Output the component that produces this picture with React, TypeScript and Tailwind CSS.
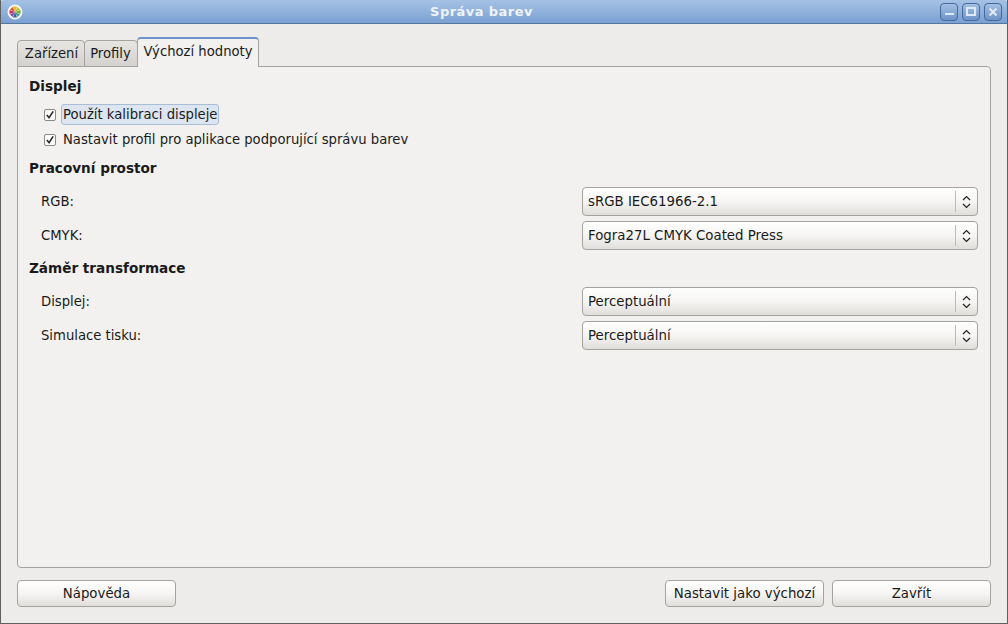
import React from "react";

const font = "font-['DejaVu_Sans',sans-serif]";

const Checkbox: React.FC = () => (
  <span className="w-[12px] h-[12px] border border-[#8a8a88] rounded-[2px] bg-[#fbfbfa] flex items-center justify-center shrink-0">
    <svg width="10" height="10" viewBox="0 0 11 11">
      <path d="M2 5.5 L4.5 8.5 L9 1.5" fill="none" stroke="#2a2a2a" strokeWidth="1.8" />
    </svg>
  </span>
);

const Select: React.FC<{ value: string }> = ({ value }) => (
  <div className="w-[396px] h-[29px] border border-[#a5a39f] rounded-[4px] bg-gradient-to-b from-white via-[#f6f5f3] to-[#dfdedb] flex items-center text-[13.33px] text-[#1a1a1a]">
    <span className="flex-1 pl-[5px]">{value}</span>
    <span className="w-px h-[21px] bg-[#bdbbb7]" />
    <span className="w-[21px] pr-px flex items-center justify-center">
      <svg width="9" height="14" viewBox="0 0 9 14">
        <path d="M1 5 L4.5 1.5 L8 5 M1 9 L4.5 12.5 L8 9" fill="none" stroke="#222" strokeWidth="1.2" />
      </svg>
    </span>
  </div>
);

const FormRow: React.FC<{ label: string; value: string }> = ({ label, value }) => (
  <div className="flex items-center justify-between pl-[12px] pr-px h-[29px]">
    <span className="text-[13.2px] text-[#1a1a1a]">{label}</span>
    <Select value={value} />
  </div>
);

const WinButton: React.FC<{ children: React.ReactNode }> = ({ children }) => (
  <div className="w-[18px] h-[18px] rounded-[4px] border border-[#456a9c] bg-gradient-to-b from-[#a3c0e2] to-[#6d94c8] flex items-center justify-center">
    {children}
  </div>
);

const Button: React.FC<{ label: string; className: string }> = ({ label, className }) => (
  <button className={`h-[27px] border border-[#a5a39f] rounded-[4px] bg-gradient-to-b from-white via-[#f6f5f3] to-[#dfdedb] text-[13.33px] text-[#1a1a1a] ${className}`}>
    {label}
  </button>
);

export default function App() {
  return (
    <div className={`w-[1008px] h-[624px] overflow-hidden flex flex-col bg-[#edecea] border-x border-b border-[#60605e] ${font}`}>
      {/* title bar */}
      <div className="h-[24px] -mx-px shrink-0 rounded-t-[4px] bg-gradient-to-b from-[#a5c2e4] to-[#7ba0d2] border-b border-[#55779f] flex items-center pl-[7px] pr-[6px] gap-[4px]">
        <svg width="16" height="16" viewBox="0 0 16 16" className="shrink-0">
          <circle cx="8" cy="8" r="7.5" fill="#f7f5ee" />
          <path d="M8 8 L6 2.5 L10 2.5 Z" fill="#e8b82c" />
          <path d="M8 8 L10.5 3 L13 5.5 Z" fill="#b5c42c" />
          <path d="M8 8 L13.5 6 L13.5 10 Z" fill="#6fb02e" />
          <path d="M8 8 L13 10.5 L10.5 13 Z" fill="#3f9f8f" />
          <path d="M8 8 L10 13.5 L6 13.5 Z" fill="#3465a4" />
          <path d="M8 8 L5.5 13 L3 10.5 Z" fill="#7a4aa4" />
          <path d="M8 8 L2.5 10 L2.5 6 Z" fill="#c22f6c" />
          <path d="M8 8 L3 5.5 L5.5 3 Z" fill="#e2502c" />
        </svg>
        <div className="flex-1 text-center text-[13px] font-bold tracking-[0.45px] text-[#eef3fa]">Správa barev</div>
        <WinButton><span className="w-[9px] h-[2px] mt-[4px] bg-[#dfe9f6]" /></WinButton>
        <WinButton><span className="w-[10px] h-[9px] border-2 border-[#dfe9f6]" /></WinButton>
        <WinButton>
          <svg width="10" height="10" viewBox="0 0 10 10">
            <path d="M1.5 1.5 L8.5 8.5 M8.5 1.5 L1.5 8.5" stroke="#e4ecf7" strokeWidth="2" />
          </svg>
        </WinButton>
      </div>

      <div className="flex-1 flex flex-col pt-[13px] pl-[16px] pr-[16px] pb-[16px]">
        {/* tabs */}
        <div className="flex items-end h-[30px] text-[13.2px] text-[#1a1a1a] relative z-10 -mb-px">
          <div className="h-[27px] w-[68px] pl-px border border-[#a5a39f] rounded-t-[4px] bg-gradient-to-b from-[#e6e5e2] to-[#d3d2cf] flex items-center justify-center">Zařízení</div>
          <div className="h-[27px] w-[54px] -ml-px pr-px border border-[#a5a39f] rounded-t-[4px] bg-gradient-to-b from-[#e6e5e2] to-[#d3d2cf] flex items-center justify-center">Profily</div>
          <div className="h-[30px] w-[122px] -ml-px border border-[#a5a39f] border-t-2 border-t-[#6d94c8] border-b-0 rounded-t-[4px] bg-[#f2f1ef] flex items-center justify-center pb-[2px]">Výchozí hodnoty</div>
        </div>

        {/* tab panel */}
        <div className="h-[502px] border border-[#a5a39f] rounded-b-[4px] rounded-tr-[4px] bg-[#f2f1ef] px-[11px] pt-[11px] text-[13.2px] text-[#1a1a1a]">
          <div className="font-bold text-[13.6px] h-[17px] leading-[17px]">Displej</div>
          <div className="flex items-center gap-[5px] pl-[15px] mt-[9px] h-[21px]">
            <Checkbox />
            <span className="border border-[#a9bdd6] rounded-[3px] bg-[#dde5f0] px-px h-[21px] leading-[19px]">Použít kalibraci displeje</span>
          </div>
          <div className="flex items-center gap-[7px] pl-[15px] mt-[4px] h-[21px]">
            <Checkbox />
            <span>Nastavit profil pro aplikace podporující správu barev</span>
          </div>
          <div className="font-bold text-[13.6px] h-[17px] leading-[17px] mt-[10px]">Pracovní prostor</div>
          <div className="flex flex-col gap-[5px] mt-[10px]">
            <FormRow label="RGB:" value="sRGB IEC61966-2.1" />
            <FormRow label="CMYK:" value="Fogra27L CMYK Coated Press" />
          </div>
          <div className="font-bold text-[13.6px] h-[17px] leading-[17px] mt-[10px]">Záměr transformace</div>
          <div className="flex flex-col gap-[5px] mt-[10px]">
            <FormRow label="Displej:" value="Perceptuální" />
            <FormRow label="Simulace tisku:" value="Perceptuální" />
          </div>
        </div>

        {/* buttons */}
        <div className="flex mt-[12px] gap-[8px]">
          <Button label="Nápověda" className="w-[159px] mr-auto" />
          <Button label="Nastavit jako výchozí" className="w-[159px]" />
          <Button label="Zavřít" className="w-[159px]" />
        </div>
      </div>
    </div>
  );
}
